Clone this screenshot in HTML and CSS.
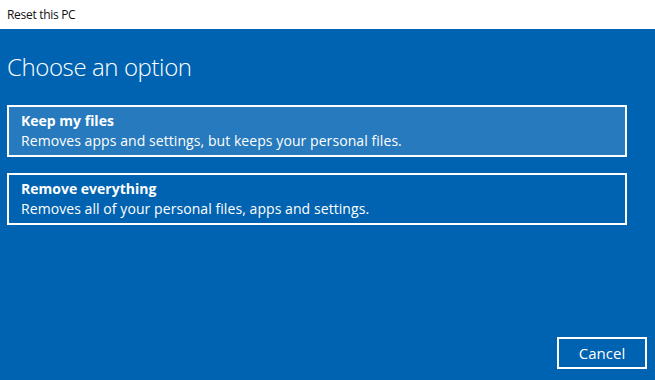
FILE: index.html
```html
<!DOCTYPE html>
<html lang="en">
<head>
    <meta charset="UTF-8">
    <title>Reset this PC</title>
    <link rel="stylesheet" href="styles.css">
</head>
<body>
    <div class="title-bar">Reset this PC</div>

    <div class="panel">
        <h1>Choose an option</h1>

        <div class="options">
            <div class="option option-active">
                <div class="option-title">Keep my files</div>
                <div class="option-desc">Removes apps and settings, but keeps your personal files.</div>
            </div>
            <div class="option">
                <div class="option-title">Remove everything</div>
                <div class="option-desc">Removes all of your personal files, apps and settings.</div>
            </div>
        </div>

        <div class="actions">
            <button class="btn-cancel">Cancel</button>
        </div>
    </div>
</body>
</html>
```

FILE: styles.css
```css
:root {
    --azul: #0063b1;
    --azul-hover: #267abd;
    --blanco: #ffffff;
}

* {
    margin: 0;
    padding: 0;
    box-sizing: border-box;
    font-family: 'Open Sans', 'Noto Sans', sans-serif;
}

body {
    width: 655px;
    height: 380px;
    display: flex;
    flex-direction: column;
    overflow: hidden;
}

.title-bar {
    height: 29px;
    background: var(--blanco);
    color: #111;
    font-size: 12px;
    line-height: 29px;
    padding-left: 7px;
    letter-spacing: -0.3px;
}

.panel {
    flex: 1;
    background: var(--azul);
    color: var(--blanco);
    display: flex;
    flex-direction: column;
    padding: 22px 8px 11px 7px;
}

h1 {
    font-size: 24px;
    font-weight: 300;
    line-height: 32px;
    letter-spacing: -0.4px;
}

.options {
    margin-top: 22px;
    margin-right: 20px;
    display: flex;
    flex-direction: column;
    gap: 16px;
}

.option {
    border: 2px solid var(--blanco);
    padding: 4px 12px;
    font-size: 14px;
    line-height: 20px;
}

.option-active {
    background: var(--azul-hover);
}

.option-title {
    font-weight: 700;
}

.option-desc {
    letter-spacing: 0.07px;
}

.actions {
    margin-top: auto;
    display: flex;
    justify-content: flex-end;
}

.btn-cancel {
    width: 90px;
    height: 32px;
    background: transparent;
    border: 2px solid var(--blanco);
    color: var(--blanco);
    font-size: 15px;
}
```
